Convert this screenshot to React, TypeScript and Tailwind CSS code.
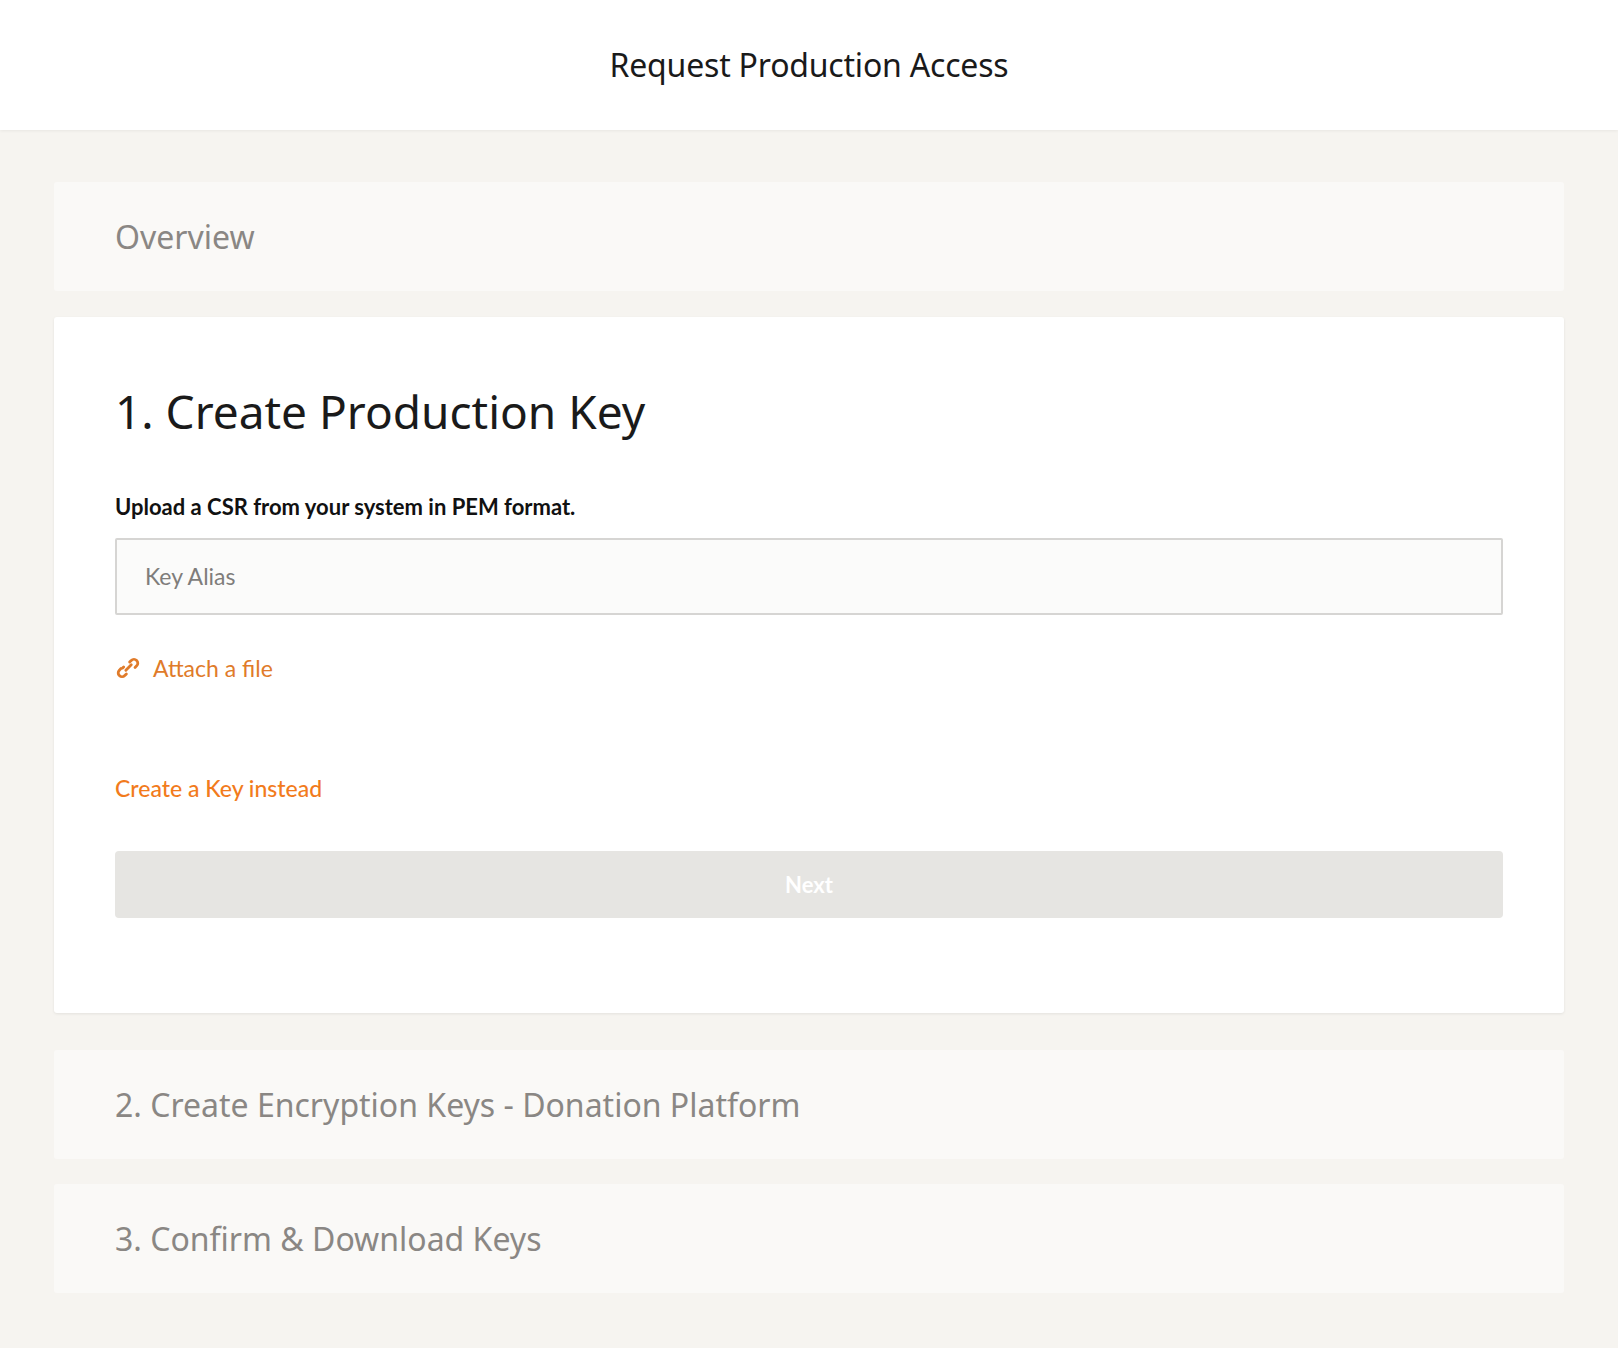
export default function App() {
  const head = { fontFamily: '"Noto Sans", Inter, sans-serif' };
  const body = { fontFamily: 'Lato, "Noto Sans", sans-serif' };
  return (
    <div className="min-h-[1348px] bg-[#f6f4f0]" style={body}>
      <header className="h-[130px] bg-white flex items-center justify-center shadow-[0_1px_3px_rgba(0,0,0,0.06)]">
        <h1 className="text-[32px] text-[#1a1a1a] tracking-[-0.2px]" style={head}>Request Production Access</h1>
      </header>
      <main className="px-[54px] pt-[52px] pb-[55px] flex flex-col">
        <section className="h-[109px] bg-[#faf9f7] rounded-[3px] flex items-center px-[61px]">
          <h2 className="text-[32px] text-[#8a8784]" style={head}>Overview</h2>
        </section>
        <section className="mt-[26px] h-[696px] bg-white rounded-[3px] shadow-[0_1px_3px_rgba(0,0,0,0.08)] px-[61px] pt-[62px]">
          <h2 className="text-[46px] leading-[64px] text-[#1a1a1a]" style={head}>1. Create Production Key</h2>
          <p className="mt-[49px] text-[22px] font-bold text-[#111] leading-[30px]">Upload a CSR from your system in PEM format.</p>
          <div className="mt-[16px] h-[77px] border-2 border-[#d6d5d3] rounded-[2px] bg-[#fbfbfa] flex items-center px-[28px]">
            <span className="text-[23px] text-[#7f7d7b]">Key Alias</span>
          </div>
          <div className="mt-[38px] flex items-center gap-[12px] text-[#e07b2a]">
            <svg width="26" height="26" viewBox="0 0 24 24" fill="none" stroke="currentColor" strokeWidth="2.6" strokeLinecap="round">
              <path d="M10 14l5-5" />
              <path d="M13.5 6.5l1.5-1.5a3.5 3.5 0 015 5l-1.5 1.5" />
              <path d="M10.5 17.5L9 19a3.5 3.5 0 01-5-5l1.5-1.5" />
              <path d="M8 11l-1 1" />
            </svg>
            <span className="text-[23px] leading-[30px]">Attach a file</span>
          </div>
          <div className="mt-[90px] text-[23px] leading-[30px] font-medium text-[#f27b1c]">Create a Key instead</div>
          <button className="mt-[48px] w-full h-[67px] bg-[#e6e5e2] rounded-[4px] text-white text-[22px] font-bold">Next</button>
        </section>
        <section className="mt-[37px] h-[109px] bg-[#faf9f7] rounded-[3px] flex items-center px-[61px]">
          <h2 className="text-[32px] text-[#8a8784]" style={head}>2. Create Encryption Keys - Donation Platform</h2>
        </section>
        <section className="mt-[25px] h-[109px] bg-[#faf9f7] rounded-[3px] flex items-center px-[61px]">
          <h2 className="text-[32px] text-[#8a8784]" style={head}>3. Confirm &amp; Download Keys</h2>
        </section>
      </main>
    </div>
  );
}
